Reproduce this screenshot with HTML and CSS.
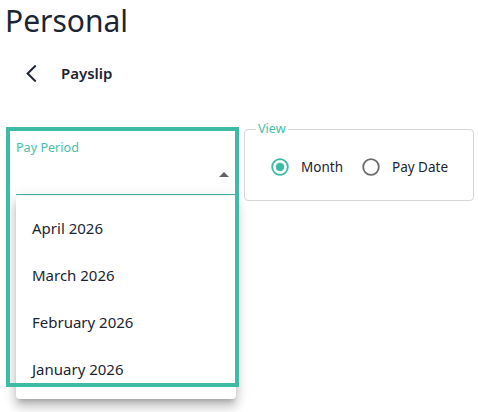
FILE: index.html
```html
<!DOCTYPE html>
<html lang="en">
<head>
<meta charset="utf-8">
<title>Personal - Payslip</title>
<link rel="stylesheet" href="styles.css">
</head>
<body>
<main class="page">
  <h1 class="title">Personal</h1>
  <div class="back-row">
    <svg class="back-icon" width="12" height="17" viewBox="0 0 12 17" aria-hidden="true">
      <polyline points="10,1.2 2.6,8.5 10,15.8" fill="none" stroke="#1d2533" stroke-width="2" stroke-linecap="square"/>
    </svg>
    <span class="back-label">Payslip</span>
  </div>
  <div class="form-row">
    <div class="select">
      <div class="select-label">Pay Period</div>
      <div class="select-input">
        <svg class="select-arrow" width="10" height="5" viewBox="0 0 10 5" aria-hidden="true">
          <polygon points="0,5 5,0 10,5" fill="#5f6368"/>
        </svg>
      </div>
      <ul class="menu">
        <li class="menu-item">April 2026</li>
        <li class="menu-item">March 2026</li>
        <li class="menu-item">February 2026</li>
        <li class="menu-item">January 2026</li>
      </ul>
    </div>
    <fieldset class="view">
      <legend class="view-legend">View</legend>
      <div class="radios">
        <label class="radio">
          <svg class="radio-icon" width="20" height="20" viewBox="0 0 20 20" aria-hidden="true">
            <circle cx="10" cy="10" r="7.8" fill="none" stroke="#3dbba4" stroke-width="1.8"/>
            <circle cx="10" cy="10" r="4.3" fill="#3dbba4"/>
          </svg>
          <span>Month</span>
        </label>
        <label class="radio">
          <svg class="radio-icon" width="20" height="20" viewBox="0 0 20 20" aria-hidden="true">
            <circle cx="10" cy="10" r="7.8" fill="none" stroke="#6b6b6b" stroke-width="1.8"/>
          </svg>
          <span>Pay Date</span>
        </label>
      </div>
    </fieldset>
  </div>
  <div class="highlight"></div>
</main>
</body>
</html>
```

FILE: styles.css
```css
html, body {
  margin: 0;
  padding: 0;
  background: #ffffff;
}

body {
  font-family: "Noto Sans", "Open Sans", sans-serif;
  color: #1d2533;
  width: 478px;
  height: 412px;
  overflow: hidden;
}

.page {
  position: relative;
  display: flex;
  flex-direction: column;
  height: 412px;
}

.title {
  margin: 0;
  padding-left: 5px;
  font-size: 30px;
  line-height: 41px;
  font-weight: 400;
  color: #1d2533;
}

.back-row {
  display: flex;
  align-items: center;
  margin-top: 22px;
  padding-left: 25px;
  height: 20px;
}

.back-icon {
  display: block;
  margin-top: 1px;
}

.back-label {
  margin-left: 24px;
  font-size: 15px;
  line-height: 20px;
  font-weight: 600;
}

.form-row {
  display: flex;
  align-items: flex-start;
  gap: 8px;
  margin-top: 38px;
  padding-left: 16px;
}

.select {
  position: relative;
  width: 220px;
  padding-top: 18px;
}

.select-label {
  font-size: 12.6px;
  line-height: 18px;
  color: #45bfa8;
}

.select-input {
  height: 37px;
  border-bottom: 1px solid #3dbba4;
  display: flex;
  align-items: center;
  justify-content: flex-end;
  padding-right: 7px;
}

.select-arrow {
  display: block;
  margin-top: -2px;
}

.menu {
  position: absolute;
  left: 0;
  top: 75px;
  width: 220px;
  margin: 0;
  padding: 9px 0 7px;
  list-style: none;
  background: #ffffff;
  border-radius: 4px;
  box-shadow: 0 5px 5px -3px rgba(0,0,0,0.2), 0 8px 10px 1px rgba(0,0,0,0.14), 0 3px 14px 2px rgba(0,0,0,0.12);
  z-index: 2;
}

.menu-item {
  height: 46.8px;
  display: flex;
  align-items: center;
  padding: 0 16px;
  font-size: 15px;
  color: #1d2533;
}

.view {
  width: 230px;
  box-sizing: border-box;
  margin: 0;
  padding: 15px 11px 18px 11px;
  border: 1px solid #d6d6d6;
  border-radius: 4px;
  min-inline-size: 0;
}

.view-legend {
  padding: 0 2px;
  font-size: 12.6px;
  line-height: 16px;
  color: #45bfa8;
}

.radios {
  display: flex;
  align-items: center;
  height: 30px;
  padding-left: 14px;
}

.radio {
  display: flex;
  align-items: center;
  font-size: 13.5px;
  color: #1d2533;
}

.radio + .radio {
  margin-left: 18px;
}

.radio-icon {
  display: block;
  margin-right: 11px;
}

.highlight {
  position: absolute;
  left: 6px;
  top: 127px;
  width: 233px;
  height: 260px;
  box-sizing: border-box;
  border: 4px solid #3dbba4;
  z-index: 3;
  pointer-events: none;
}
```
